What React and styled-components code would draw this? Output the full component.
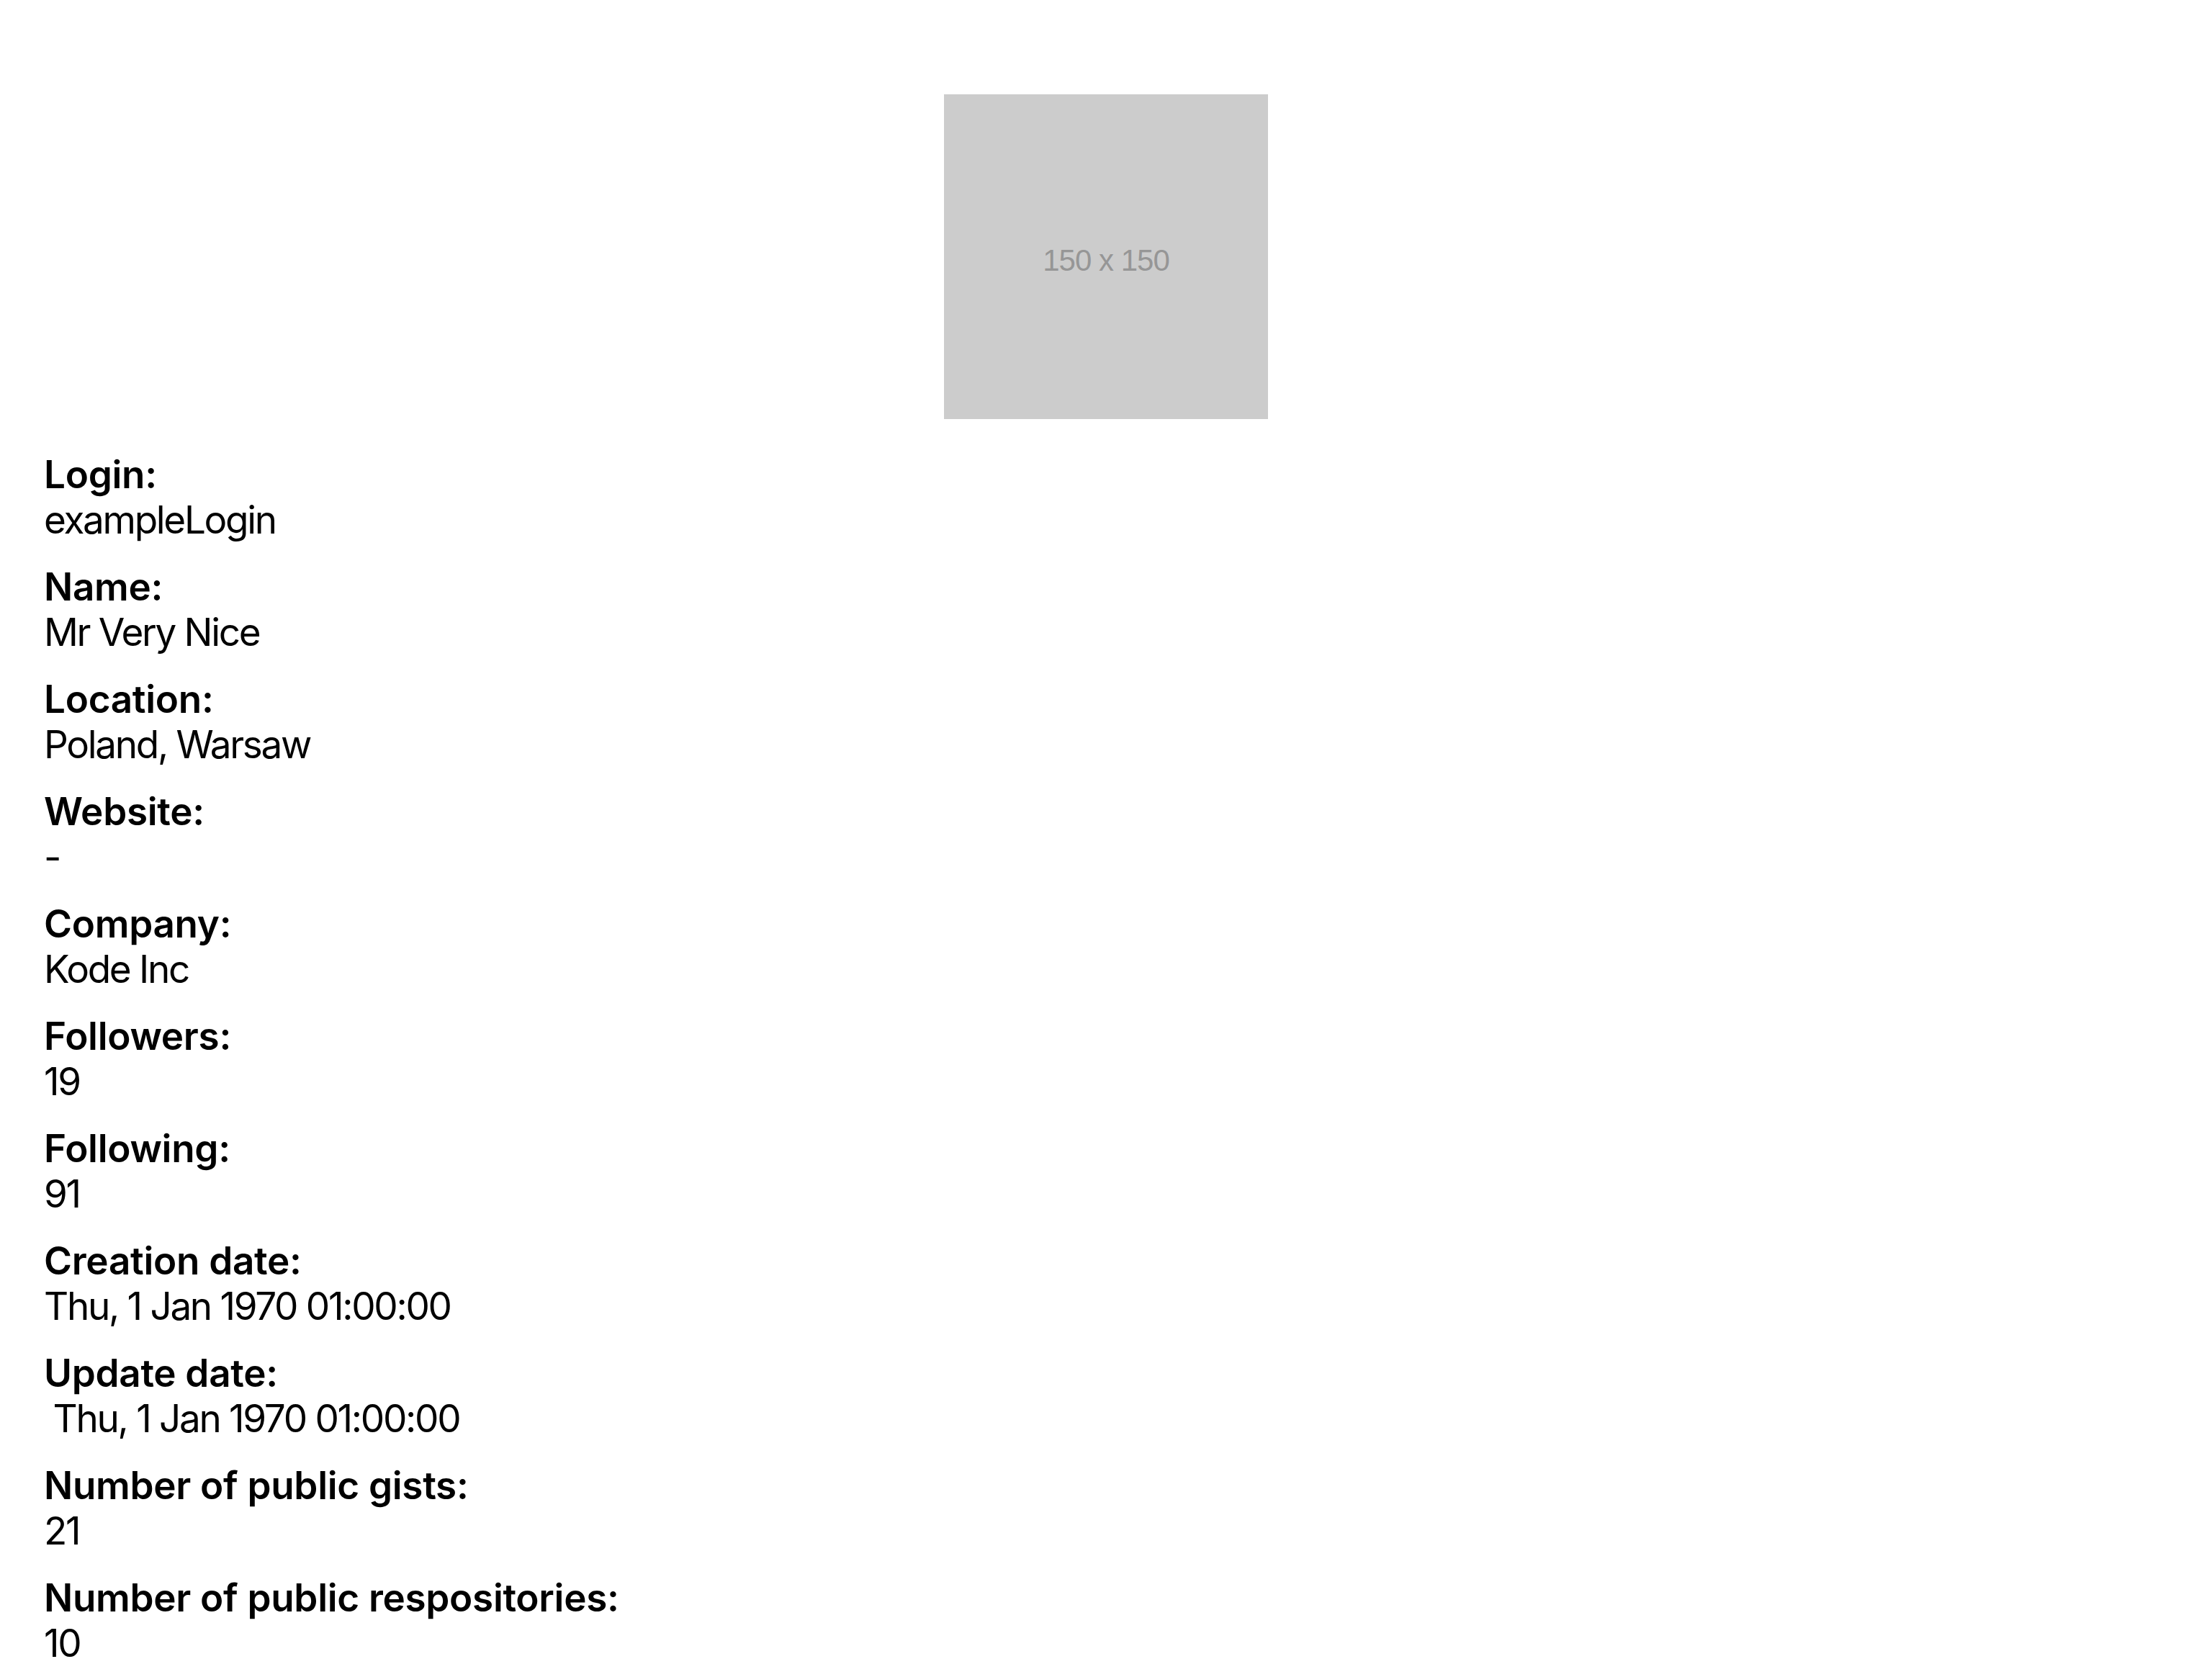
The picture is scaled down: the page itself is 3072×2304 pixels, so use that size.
import React from 'react';
import styled, { createGlobalStyle } from 'styled-components';

const GlobalStyle = createGlobalStyle`
  html, body {
    margin: 0;
    padding: 0;
    background: #ffffff;
  }
  body {
    font-family: Inter, "Noto Sans", "Liberation Sans", sans-serif;
    color: #000000;
  }
`

const Screen = styled.div`
  width: 3072px;
  height: 2304px;
  overflow: hidden;
  box-sizing: border-box;
  padding: 131px 61px 0;
  display: flex;
  flex-direction: column;
`

const AvatarRow = styled.div`
  display: flex;
  justify-content: center;
  margin-bottom: 46px;
`

const Avatar = styled.div`
  width: 450px;
  height: 451px;
  box-sizing: border-box;
  padding-top: 10px;
  background-color: #cccccc;
  color: #969696;
  font-family: "Liberation Sans", Arial, sans-serif;
  font-size: 42px;
  letter-spacing: -1px;
  display: flex;
  align-items: center;
  justify-content: center;
`

const Field = styled.div`
  display: flex;
  flex-direction: column;
  margin-bottom: 30px;
`

const Label = styled.div`
  font-size: 53px;
  line-height: 63px;
  font-weight: 600;
  letter-spacing: -0.3px;
`

const Value = styled.div`
  font-size: 53px;
  line-height: 63px;
  font-weight: 400;
  letter-spacing: -2.3px;
  white-space: pre;
`

const fields = [
  ['Login:', 'exampleLogin'],
  ['Name:', 'Mr Very Nice'],
  ['Location:', 'Poland, Warsaw'],
  ['Website:', '-'],
  ['Company:', 'Kode Inc'],
  ['Followers:', '19'],
  ['Following:', '91'],
  ['Creation date:', 'Thu, 1 Jan 1970 01:00:00'],
  ['Update date:', ' Thu, 1 Jan 1970 01:00:00'],
  ['Number of public gists:', '21'],
  ['Number of public respositories:', '10'],
]

export default function App() {
  return (
    <>
      <GlobalStyle />
      <Screen>
        <AvatarRow>
          <Avatar>150 x 150</Avatar>
        </AvatarRow>
        {fields.map(([label, value]) => (
          <Field key={label}>
            <Label>{label}</Label>
            <Value>{value}</Value>
          </Field>
        ))}
      </Screen>
    </>
  )
}
